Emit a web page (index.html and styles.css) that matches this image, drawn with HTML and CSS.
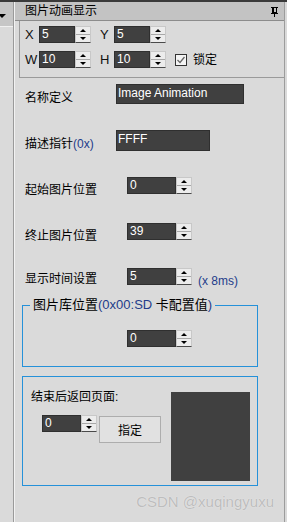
FILE: index.html
```html
<!DOCTYPE html>
<html lang="zh">
<head>
  <meta charset="UTF-8">
  <title>图片动画显示</title>
  <link rel="stylesheet" href="styles.css">
</head>
<body>
  <div class="topline"></div>
  <div class="window">
    <div class="dock">
      <div class="dock-head"><span class="dock-arrow"></span></div>
    </div>
    <div class="panel">
      <div class="titlebar">
        <span>图片动画显示</span>
        <svg class="pin" width="7" height="10" viewBox="0 0 7 10">
          <rect x="0" y="0" width="7" height="1" fill="#000"/>
          <rect x="1.5" y="0.5" width="4" height="5" fill="none" stroke="#000"/>
          <rect x="1" y="1" width="2" height="5" fill="#000"/>
          <rect x="0" y="6" width="7" height="1" fill="#000"/>
          <rect x="3" y="7" width="1" height="3" fill="#000"/>
        </svg>
      </div>

      <div class="posbox">
        <div class="posrow">
          <span class="axis">X</span>
          <span class="field num w-pos">5</span>
          <span class="spin"><i class="up"></i><i class="down"></i></span>
          <span class="axis axis-gap">Y</span>
          <span class="field num w-pos">5</span>
          <span class="spin"><i class="up"></i><i class="down"></i></span>
        </div>
        <div class="posrow">
          <span class="axis">W</span>
          <span class="field num w-pos">10</span>
          <span class="spin"><i class="up"></i><i class="down"></i></span>
          <span class="axis axis-gap">H</span>
          <span class="field num w-pos">10</span>
          <span class="spin"><i class="up"></i><i class="down"></i></span>
          <svg class="check" width="12" height="12" viewBox="0 0 12 12">
            <rect x="0.5" y="0.5" width="11" height="11" fill="#f4f4f4" stroke="#333"/>
            <polyline points="2.5,6 5,8.5 9.5,3" fill="none" stroke="#666" stroke-width="1.3"/>
          </svg>
          <span class="check-text">锁定</span>
        </div>
      </div>

      <div class="row r-name">
        <span class="lbl">名称定义</span>
        <span class="field text w-name">Image Animation</span>
      </div>
      <div class="row r-desc">
        <span class="lbl">描述指针<em>(0x)</em></span>
        <span class="field text w-desc">FFFF</span>
      </div>
      <div class="row r-spin r-start">
        <span class="lbl lbl-wide">起始图片位置</span>
        <span class="field num w-spin">0</span>
        <span class="spin"><i class="up"></i><i class="down"></i></span>
      </div>
      <div class="row r-spin r-end">
        <span class="lbl lbl-wide">终止图片位置</span>
        <span class="field num w-spin">39</span>
        <span class="spin"><i class="up"></i><i class="down"></i></span>
      </div>
      <div class="row r-spin r-time">
        <span class="lbl lbl-wide lbl-time">显示时间设置</span>
        <span class="field num w-spin">5</span>
        <span class="spin"><i class="up"></i><i class="down"></i></span>
        <em class="unit">(x 8ms)</em>
      </div>

      <fieldset class="group lib">
        <legend>图片库位置<em>(0x00:SD </em>卡配置值<em>)</em></legend>
        <div class="lib-row">
          <span class="field num w-spin">0</span>
          <span class="spin"><i class="up"></i><i class="down"></i></span>
        </div>
      </fieldset>

      <div class="group ret">
        <div class="ret-left">
          <div class="ret-label">结束后返回页面:</div>
          <div class="ret-ctrl">
            <span class="field num w-ret">0</span>
            <span class="spin"><i class="up"></i><i class="down"></i></span>
            <button class="btn">指定</button>
          </div>
        </div>
        <div class="preview"></div>
      </div>

      <div class="mark">CSDN @xuqingyuxu</div>
    </div>
    <div class="edge"></div>
  </div>
</body>
</html>
```

FILE: styles.css
```css
body {
  margin: 0;
  width: 287px;
  height: 522px;
  overflow: hidden;
  background: #dadada;
  font-family: "Liberation Sans", "Noto Sans CJK SC", sans-serif;
  font-size: 12px;
  color: #000;
}
em {
  font-style: normal;
  color: #233c8a;
}
.topline {
  height: 2px;
  background: #3a3a3a;
}
.window {
  display: flex;
  height: 520px;
}
.dock {
  width: 13px;
  border-right: 1px solid #9a9a9a;
  box-shadow: 1px 0 0 #f2f2f2;
}
.dock-head {
  height: 24px;
  background: #c6c6c6;
  border-bottom: 1px solid #f0f0f0;
  position: relative;
  overflow: hidden;
}
.dock-arrow {
  position: absolute;
  left: -2px;
  top: 12px;
  border-left: 4px solid transparent;
  border-right: 4px solid transparent;
  border-top: 4px solid #000;
}
.panel {
  flex: 1;
  margin-left: 1px;
  display: flex;
  flex-direction: column;
}
.edge {
  width: 2px;
  border-left: 1px solid #9c9c9c;
}

.titlebar {
  height: 18px;
  background: #c3c3c3;
  border-bottom: 1px solid #8c8c8c;
  display: flex;
  align-items: center;
  justify-content: space-between;
  padding: 0 6px 0 10px;
  line-height: 16px;
}
.pin {
  display: block;
  margin-top: 2px;
}

.posbox {
  margin-left: 4px;
  border-left: 1px solid #9a9a9a;
  border-bottom: 1px solid #9a9a9a;
  padding: 5px 0 9px 5px;
  display: flex;
  flex-direction: column;
  gap: 8px;
}
.posrow {
  display: flex;
  align-items: center;
  height: 17px;
}
.axis {
  width: 14px;
  font-size: 13px;
  line-height: 17px;
  color: #111;
}
.axis-gap {
  margin-left: 9px;
}
.check {
  display: block;
  margin-left: 9px;
}
.check-text {
  margin-left: 6px;
  line-height: 16px;
}

.field {
  display: block;
  flex: none;
  box-sizing: border-box;
  background: #404040;
  border: 1px solid #2f2f2f;
  color: #fff;
  font-family: "Liberation Sans", sans-serif;
  font-size: 12px;
  white-space: nowrap;
  overflow: hidden;
}
.num {
  height: 17px;
  line-height: 14px;
  padding-left: 2px;
}
.text {
  line-height: 16px;
  padding-left: 1px;
}
.w-pos { width: 36px; }
.w-spin { width: 49px; }
.w-ret { width: 39px; }
.w-name { width: 128px; height: 20px; }
.w-desc { width: 94px; height: 21px; line-height: 17px; }

.spin {
  display: flex;
  flex: none;
  flex-direction: column;
  width: 16px;
  height: 17px;
  box-sizing: border-box;
  background: #ececec;
  border: 1px solid #c8c8c8;
  border-bottom: 1px solid #4a4a4a;
}
.spin i {
  flex: 1;
  display: flex;
  align-items: center;
  justify-content: center;
}
.spin .up {
  border-bottom: 1px solid #a8a8a8;
}
.spin i::after {
  content: "";
  border-left: 3px solid transparent;
  border-right: 3px solid transparent;
}
.spin .up::after {
  border-bottom: 3px solid #000;
}
.spin .down::after {
  border-top: 3px solid #000;
}

.row {
  display: flex;
  align-items: flex-start;
  padding-left: 10px;
}
.lbl {
  width: 91px;
  flex: none;
  line-height: 16px;
  margin-top: 6px;
}
.lbl-wide {
  width: 102px;
  margin-top: 5px;
}
.lbl-time {
  margin-top: 3px;
}
.r-name { margin-top: 6px; height: 20px; }
.r-desc { margin-top: 26px; height: 21px; }
.r-spin { height: 17px; }
.r-start { margin-top: 26px; }
.r-end { margin-top: 29px; }
.r-time { margin-top: 28px; }
.unit {
  margin: 6px 0 0 6px;
  line-height: 14px;
}

.group {
  width: 236px;
  box-sizing: border-box;
  border: 1px solid #2591d9;
  margin-left: 7px;
}
.lib {
  margin-top: 12px;
  margin-right: 0;
  padding: 17px 0 19px;
  min-width: 0;
}
.lib legend {
  padding: 0 3px;
  margin-left: 7px;
  font-size: 13px;
  line-height: 16px;
}
.lib-row {
  display: flex;
  padding-left: 104px;
}

.ret {
  margin-top: 9px;
  height: 110px;
  display: flex;
}
.ret-left {
  flex: 1;
  padding: 12px 0 0 8px;
}
.ret-label {
  line-height: 16px;
}
.ret-ctrl {
  display: flex;
  align-items: flex-start;
  margin-top: 10px;
  padding-left: 11px;
}
.btn {
  margin: 1px 0 0 2px;
  width: 62px;
  height: 27px;
  background: #e1e1e1;
  border: 1px solid #adadad;
  font-family: "Liberation Sans", "Noto Sans CJK SC", sans-serif;
  font-size: 12px;
  color: #000;
  padding: 0;
}
.preview {
  width: 79px;
  height: 89px;
  background: #404040;
  margin: 15px 7px 0 0;
}

.mark {
  margin-top: 7px;
  text-align: right;
  padding-right: 10px;
  font-size: 15px;
  line-height: 18px;
  color: #bdbdbd;
  text-shadow: 0 0 1px #f4f4f4;
}
```
